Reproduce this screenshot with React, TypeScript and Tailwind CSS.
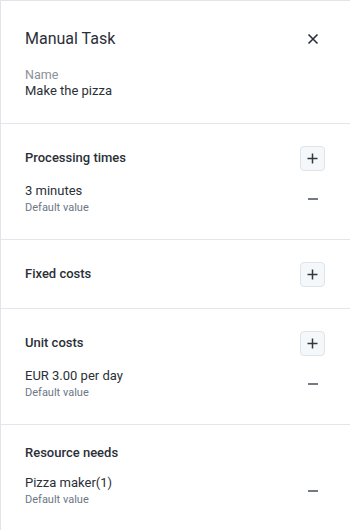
import React from "react";

const font = { fontFamily: 'Roboto, "Noto Sans", sans-serif' };

function PlusButton() {
  return (
    <button className="w-[25px] h-[25px] flex items-center justify-center rounded-[4px] border border-[#dfe4ea] bg-[#f5f8fb]">
      <svg width="11" height="11" viewBox="0 0 11 11">
        <path d="M5.5 0.5V10.5M0.5 5.5H10.5" stroke="#33383f" strokeWidth="1.5" />
      </svg>
    </button>
  );
}

function Minus() {
  return <div className="w-[10px] h-[2px] bg-[#737985] mr-[7px]" />;
}

function Item({ value }: { value: string }) {
  return (
    <div className="flex items-center justify-between">
      <div className="flex flex-col">
        <span className="text-[13px] leading-[18px] text-[#2b3038]">{value}</span>
        <span className="text-[11px] leading-[16px] text-[#6c7687]">Default value</span>
      </div>
      <Minus />
    </div>
  );
}

function Section({
  title,
  button,
  item,
}: {
  title: string;
  button: boolean;
  item?: string;
}) {
  return (
    <div className={`border-b border-[#e3e7eb] pl-6 pr-[25px] pb-[21px] ${button ? "pt-[22px]" : "pt-[19px]"}`}>
      <div className={`flex items-center justify-between ${button ? "h-[25px]" : "h-[20px]"}`}>
        <span className="text-[13px] font-medium text-[#2b3038] leading-[20px] -mt-[2px]">{title}</span>
        {button && <PlusButton />}
      </div>
      {item && (
        <div className={`${button ? "mt-[11px]" : "mt-[10px]"} pb-[2px]`}>
          <Item value={item} />
        </div>
      )}
    </div>
  );
}

export default function App() {
  return (
    <div style={font} className="w-[350px] h-[530px] bg-white border-l border-t border-[#e1e5ea] flex flex-col overflow-hidden">
      <div className="border-b border-[#e3e7eb] pl-6 pr-[25px] pt-[26px] pb-[24px]">
        <div className="flex items-center justify-between h-[24px]">
          <span className="text-[16px] leading-[24px] text-[#2b3038]">Manual Task</span>
          <svg width="12" height="12" viewBox="0 0 12 12" className="mr-[6px]">
            <path d="M1.5 1.5L10.5 10.5M10.5 1.5L1.5 10.5" stroke="#2b3038" strokeWidth="1.6" />
          </svg>
        </div>
        <div className="mt-[16px] text-[12.5px] leading-[16px] text-[#8b9098]">Name</div>
        <div className="text-[13px] leading-[16px] text-[#2b3038]">Make the pizza</div>
      </div>
      <Section title="Processing times" button item="3 minutes" />
      <Section title="Fixed costs" button />
      <Section title="Unit costs" button item="EUR 3.00 per day" />
      <Section title="Resource needs" button={false} item="Pizza maker(1)" />
    </div>
  );
}
